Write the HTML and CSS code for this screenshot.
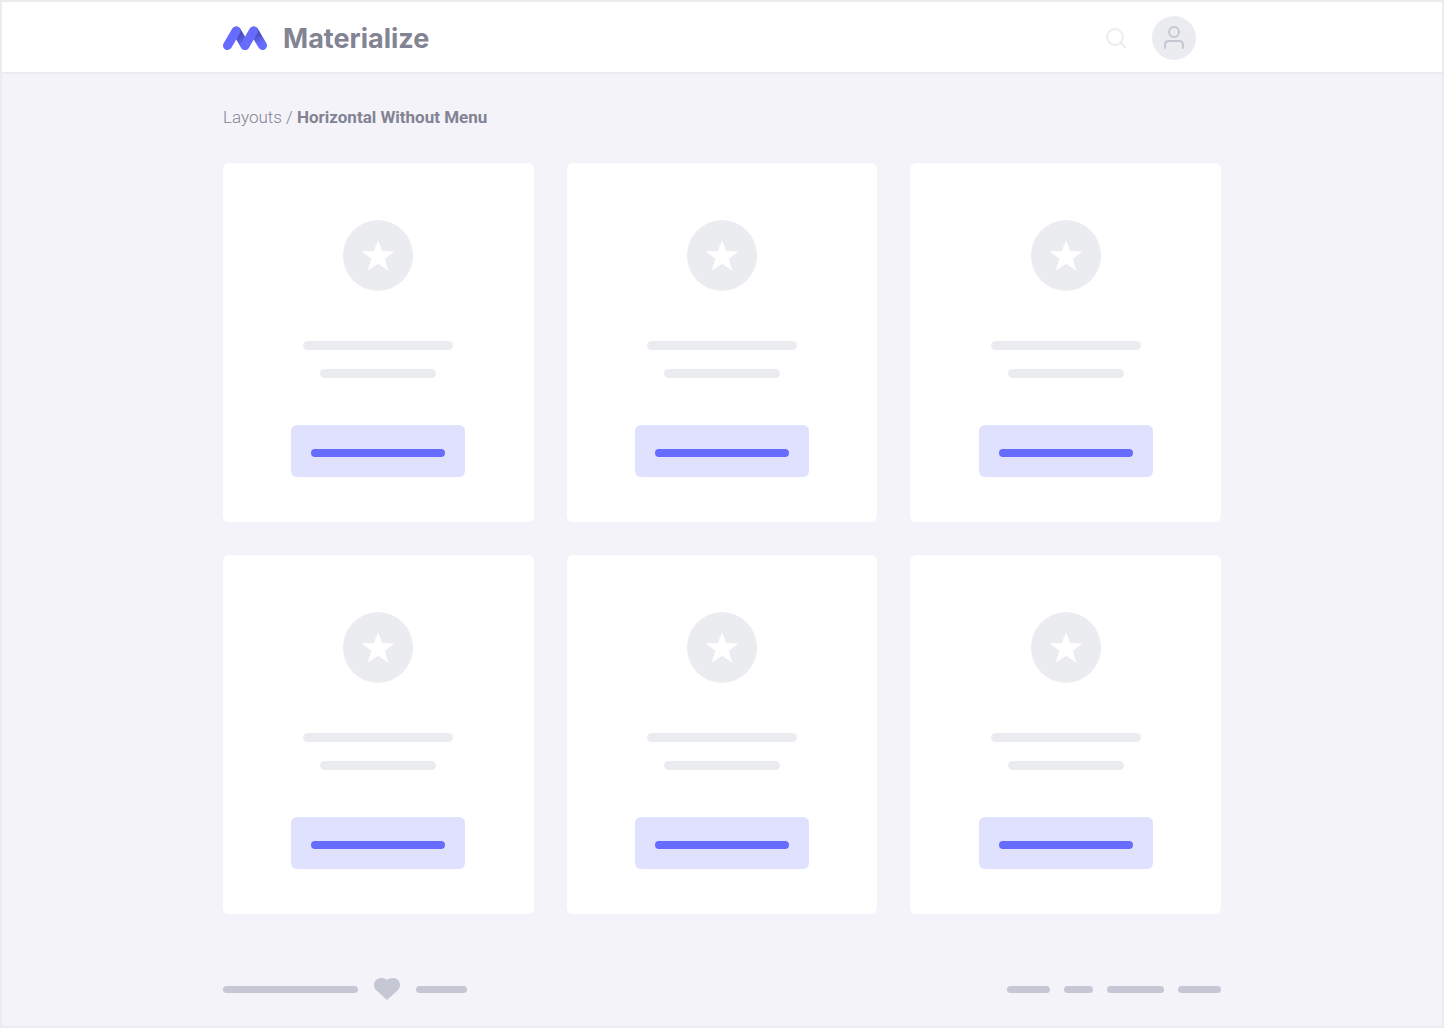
FILE: index.html
```html
<!DOCTYPE html>
<html lang="en">

<head>
    <meta charset="utf-8">
    <meta name="viewport" content="width=device-width, initial-scale=1">
    <title>Materialize</title>
    <link rel="stylesheet" href="styles.css">
</head>

<body>
    <!-- shared shapes -->
    <svg class="sprite" aria-hidden="true">
        <symbol id="star" viewBox="0 0 32 30">
            <path d="M16 0.600L19.700 10.800H31L21.900 17.400L25.400 28.400L16 21.900L6.600 28.400L10.100 17.400L1 10.800H12.300Z" fill="#fff" stroke="#fff" stroke-width="1.200" stroke-linejoin="round"/>
        </symbol>
    </svg>
    <header class="navbar">
        <div class="container navbar-inner">
            <a href="#" class="brand">
                <svg class="logo" viewBox="0 0 44 24" aria-hidden="true">
                    <defs>
                        <linearGradient id="shade1" gradientUnits="userSpaceOnUse" x1="17" y1="8" x2="22" y2="20">
                            <stop offset="0" stop-color="#484cb8"/>
                            <stop offset="1" stop-color="#666cff"/>
                        </linearGradient>
                        <linearGradient id="shade2" gradientUnits="userSpaceOnUse" x1="35" y1="7" x2="39" y2="17">
                            <stop offset="0" stop-color="#484cb8"/>
                            <stop offset="1" stop-color="#666cff"/>
                        </linearGradient>
                    </defs>
                    <g fill="none" stroke-width="9" stroke-linecap="round">
                        <path d="M13.500 5L22 19.500" stroke="url(#shade1)"/>
                        <path d="M31 5L39.500 19.500" stroke="url(#shade2)"/>
                        <path d="M4.500 19.500L13 5" stroke="#666cff"/>
                        <path d="M22 19.500L30.500 5" stroke="#666cff"/>
                    </g>
                </svg>
                <span class="brand-name">Materialize</span>
            </a>
            <div class="actions">
                <button type="button" class="search" aria-label="Search">
                    <svg viewBox="0 0 22 22" aria-hidden="true">
                        <circle cx="10" cy="10" r="8"/>
                        <path d="M16 16L20 20"/>
                    </svg>
                </button>
                <button type="button" class="avatar" aria-label="Account">
                    <svg viewBox="0 0 24 26" aria-hidden="true">
                        <circle cx="12" cy="7" r="5"/>
                        <path d="M3 23V20Q3 16 7 16H17Q21 16 21 20V23"/>
                    </svg>
                </button>
            </div>
        </div>
    </header>
    <main class="container">
        <nav class="breadcrumb">
            <a href="#">Layouts</a> / <strong>Horizontal Without Menu</strong>
        </nav>
        <div class="cards">
            <article class="card">
                <div class="circle"><svg aria-hidden="true"><use href="#star"/></svg></div>
                <div class="line"></div>
                <div class="line short"></div>
                <button type="button" class="btn" aria-label="Open"><span></span></button>
            </article>
            <article class="card">
                <div class="circle"><svg aria-hidden="true"><use href="#star"/></svg></div>
                <div class="line"></div>
                <div class="line short"></div>
                <button type="button" class="btn" aria-label="Open"><span></span></button>
            </article>
            <article class="card">
                <div class="circle"><svg aria-hidden="true"><use href="#star"/></svg></div>
                <div class="line"></div>
                <div class="line short"></div>
                <button type="button" class="btn" aria-label="Open"><span></span></button>
            </article>
            <article class="card">
                <div class="circle"><svg aria-hidden="true"><use href="#star"/></svg></div>
                <div class="line"></div>
                <div class="line short"></div>
                <button type="button" class="btn" aria-label="Open"><span></span></button>
            </article>
            <article class="card">
                <div class="circle"><svg aria-hidden="true"><use href="#star"/></svg></div>
                <div class="line"></div>
                <div class="line short"></div>
                <button type="button" class="btn" aria-label="Open"><span></span></button>
            </article>
            <article class="card">
                <div class="circle"><svg aria-hidden="true"><use href="#star"/></svg></div>
                <div class="line"></div>
                <div class="line short"></div>
                <button type="button" class="btn" aria-label="Open"><span></span></button>
            </article>
        </div>
    </main>
    <footer class="container footer">
        <div class="credits">
            <span class="dash dash-xl"></span>
            <svg class="heart" viewBox="0 0 26 22" aria-hidden="true">
                <path d="M13 22L2.200 12.200C-0.700 9.300 -0.700 4.800 2 2C5 -0.700 10 -0.700 13 2C16 -0.700 21 -0.700 24 2C26.700 4.800 26.700 9.300 23.800 12.200Z"/>
            </svg>
            <span class="dash dash-l"></span>
        </div>
        <div class="links">
            <span class="dash dash-m"></span>
            <span class="dash dash-s"></span>
            <span class="dash dash-lg"></span>
            <span class="dash dash-m"></span>
        </div>
    </footer>
</body>

</html>
```
FILE: styles.css
```css
*{
    box-sizing: border-box;
}
body{
    margin: 0;
    min-height: 100vh;
    border: 2px solid #ebecf0;
    background: #f4f3f9;
    color: #828393;
    font-family: Roboto, "Liberation Sans", sans-serif;
}
a{
    color: inherit;
    text-decoration: none;
}
button{
    border: 0;
    padding: 0;
    background: none;
    cursor: pointer;
}
svg{
    display: block;
}
.sprite{
    display: none;
}
.container{
    width: 100%;
    max-width: 998px;
    margin: 0 auto;
}

/* top bar */
.navbar{
    background: #fff;
    border-bottom: 2px solid #ebecf0;
}
.navbar-inner{
    display: flex;
    align-items: center;
    justify-content: space-between;
    height: 70px;
    padding: 2px 25px 0 0;
}
.brand{
    display: flex;
    align-items: center;
    gap: 16px;
}
.logo{
    width: 44px;
    height: 24px;
}
.brand-name{
    padding-top: 2px;
    font-family: Inter, sans-serif;
    font-size: 27px;
    font-weight: 700;
    line-height: 34px;
}
.actions{
    display: flex;
    align-items: center;
    gap: 25px;
}
.actions svg{
    fill: none;
    stroke-width: 2;
    stroke-linecap: round;
}
.search svg{
    width: 22px;
    height: 22px;
    stroke: #ebecf0;
}
.avatar{
    display: flex;
    align-items: center;
    justify-content: center;
    width: 44px;
    height: 44px;
    border-radius: 50%;
    background: #ebecf0;
}
.avatar svg{
    width: 24px;
    height: 26px;
    stroke: #c6c7d5;
}

.breadcrumb{
    padding: 33px 0 36px;
    font-size: 17px;
    font-weight: 300;
    line-height: 20px;
}
.breadcrumb strong{
    font-weight: 700;
}

/* cards */
.cards{
    display: grid;
    grid-template-columns: repeat(3, 1fr);
    gap: 33px;
}
.card{
    display: flex;
    flex-direction: column;
    align-items: center;
    padding: 57px 20px 45px;
    border-radius: 6px;
    background: #fff;
}
.circle{
    display: flex;
    align-items: center;
    justify-content: center;
    width: 70px;
    height: 71px;
    margin-bottom: 50px;
    border-radius: 50%;
    background: #ebecf0;
}
.circle svg{
    width: 32px;
    height: 30px;
}
.line{
    width: 150px;
    height: 9px;
    margin-bottom: 19px;
    border-radius: 5px;
    background: #ebecf0;
}
.line.short{
    width: 116px;
    margin-bottom: 47px;
}
.btn{
    width: 174px;
    padding: 24px 20px 20px;
    border-radius: 6px;
    background: #e0e1ff;
}
.btn span{
    display: block;
    height: 8px;
    border-radius: 4px;
    background: #666cff;
}

.footer{
    display: flex;
    align-items: center;
    justify-content: space-between;
    padding: 64px 0 26px;
}
.credits, .links{
    display: flex;
    align-items: center;
    gap: 14px;
}
.credits{
    gap: 16px;
}
.heart{
    width: 26px;
    height: 22px;
    fill: #c6c7d5;
}
.dash{
    height: 7px;
    border-radius: 4px;
    background: #c6c7d5;
}
.dash-xl{
    width: 135px;
}
.dash-lg{
    width: 57px;
}
.dash-l{
    width: 51px;
}
.dash-m{
    width: 43px;
}
.dash-s{
    width: 29px;
}
```
